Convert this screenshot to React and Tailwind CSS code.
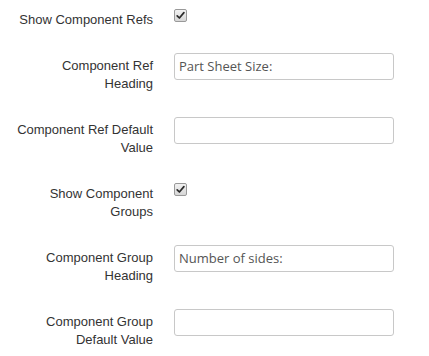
const rows = [
  { label: "Show Component Refs", type: "check" },
  { label: "Component Ref Heading", type: "text", value: "Part Sheet Size:" },
  { label: "Component Ref Default Value", type: "text", value: "" },
  { label: "Show Component Groups", type: "check" },
  { label: "Component Group Heading", type: "text", value: "Number of sides:" },
  { label: "Component Group Default Value", type: "text", value: "" },
];

const CheckBox = () => (
  <span className="flex h-[13px] w-[13px] items-center justify-center rounded-[2px] border border-[#999] bg-gradient-to-b from-[#f2f2f2] to-[#d6d6d6]">
    <svg width="9" height="9" viewBox="0 0 9 9">
      <path
        d="M1.2 4.8 L3.4 7 L7.9 1.6"
        fill="none"
        stroke="#2a2a2a"
        strokeWidth="1.7"
        strokeLinecap="round"
        strokeLinejoin="round"
      />
    </svg>
  </span>
);

export default function App() {
  return (
    <div className="min-h-screen bg-white pt-[7px] font-['Liberation_Sans',Arial,sans-serif] text-[13px] text-[#333]">
      {rows.map((row) => (
        <div key={row.label} className="mb-[23px] flex items-start">
          <label className="ml-[13px] w-[140px] pt-[4px] text-right leading-[18.5px]">
            {row.label}
          </label>
          <div className="ml-[21px]">
            {row.type === "check" ? (
              <div className="pt-[2px]">
                <CheckBox />
              </div>
            ) : (
              <input
                type="text"
                defaultValue={row.value}
                className="h-[27px] w-[220px] rounded-[3px] border border-[#c8c8c8] bg-white px-[4px] font-['Open_Sans',sans-serif] text-[13px] text-[#555] outline-none"
              />
            )}
          </div>
        </div>
      ))}
    </div>
  );
}
